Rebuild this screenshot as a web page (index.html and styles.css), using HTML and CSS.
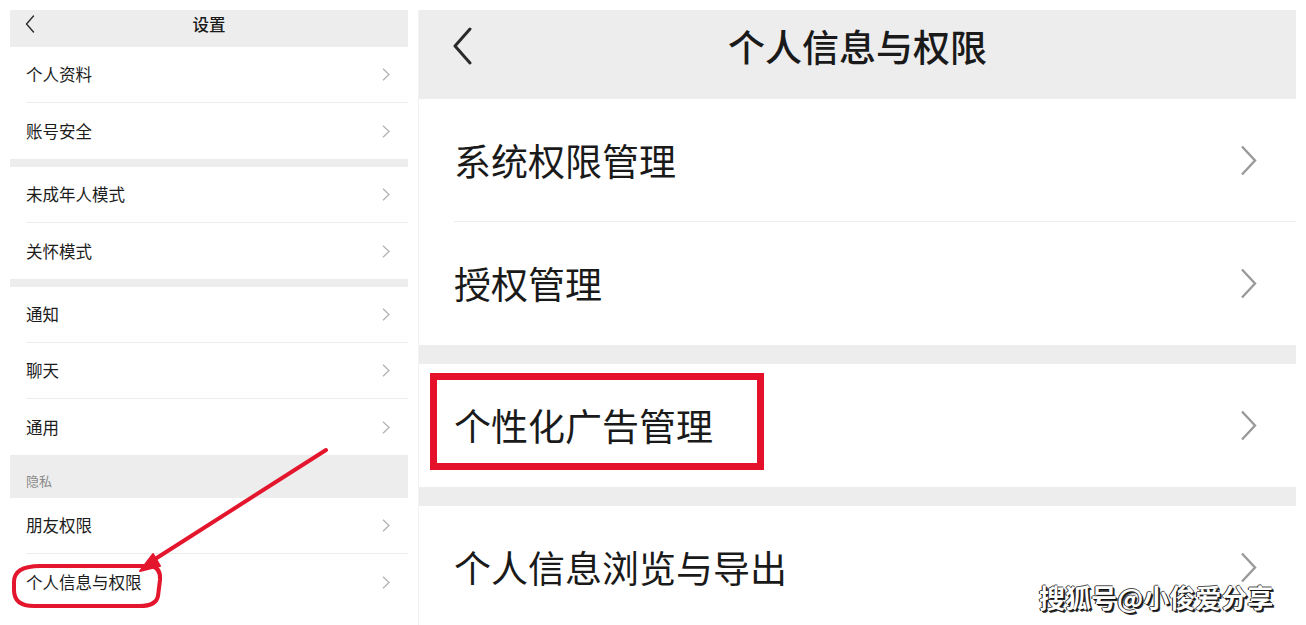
FILE: index.html
```html
<!DOCTYPE html>
<html lang="zh-CN">
<head>
<meta charset="utf-8">
<title>设置 - 个人信息与权限</title>
<link rel="stylesheet" href="styles.css">
</head>
<body>
<div class="page">
  <section class="panel panel-left">
    <header class="bar bar-left">
      <svg class="back back-sm" viewBox="0 0 10 18" width="10" height="18"><polyline points="8.5,1 1.5,9 8.5,17" /></svg>
      <div class="bar-title">设置</div>
      <div></div>
    </header>
    <div class="group">
      <div class="row"><span>个人资料</span><svg class="chev" viewBox="0 0 8 13" width="8" height="13"><polyline points="1,0.8 7,6.5 1,12.2"/></svg></div>
      <div class="row"><span>账号安全</span><svg class="chev" viewBox="0 0 8 13" width="8" height="13"><polyline points="1,0.8 7,6.5 1,12.2"/></svg></div>
    </div>
    <div class="gap"></div>
    <div class="group">
      <div class="row"><span>未成年人模式</span><svg class="chev" viewBox="0 0 8 13" width="8" height="13"><polyline points="1,0.8 7,6.5 1,12.2"/></svg></div>
      <div class="row"><span>关怀模式</span><svg class="chev" viewBox="0 0 8 13" width="8" height="13"><polyline points="1,0.8 7,6.5 1,12.2"/></svg></div>
    </div>
    <div class="gap"></div>
    <div class="group">
      <div class="row"><span>通知</span><svg class="chev" viewBox="0 0 8 13" width="8" height="13"><polyline points="1,0.8 7,6.5 1,12.2"/></svg></div>
      <div class="row"><span>聊天</span><svg class="chev" viewBox="0 0 8 13" width="8" height="13"><polyline points="1,0.8 7,6.5 1,12.2"/></svg></div>
      <div class="row"><span>通用</span><svg class="chev" viewBox="0 0 8 13" width="8" height="13"><polyline points="1,0.8 7,6.5 1,12.2"/></svg></div>
    </div>
    <div class="section-label">隐私</div>
    <div class="group">
      <div class="row"><span>朋友权限</span><svg class="chev" viewBox="0 0 8 13" width="8" height="13"><polyline points="1,0.8 7,6.5 1,12.2"/></svg></div>
      <div class="row"><span>个人信息与权限</span><svg class="chev" viewBox="0 0 8 13" width="8" height="13"><polyline points="1,0.8 7,6.5 1,12.2"/></svg></div>
    </div>
  </section>

  <section class="panel panel-right">
    <header class="bar bar-right">
      <svg class="back back-lg" viewBox="0 0 20 38" width="20" height="38"><polyline points="18,2 3,19 18,36" /></svg>
      <div class="bar-title big">个人信息与权限</div>
      <div></div>
    </header>
    <div class="group">
      <div class="row big-row"><span>系统权限管理</span><svg class="chev-lg" viewBox="0 0 17 31" width="17" height="31"><polyline points="2,1.5 15,15.5 2,29.5"/></svg></div>
      <div class="row big-row"><span>授权管理</span><svg class="chev-lg" viewBox="0 0 17 31" width="17" height="31"><polyline points="2,1.5 15,15.5 2,29.5"/></svg></div>
    </div>
    <div class="gap gap-lg"></div>
    <div class="group">
      <div class="row big-row highlighted"><span>个性化广告管理</span><svg class="chev-lg" viewBox="0 0 17 31" width="17" height="31"><polyline points="2,1.5 15,15.5 2,29.5"/></svg>
        <div class="red-box"></div>
      </div>
    </div>
    <div class="gap gap-lg"></div>
    <div class="group">
      <div class="row big-row"><span>个人信息浏览与导出</span><svg class="chev-lg" viewBox="0 0 17 31" width="17" height="31"><polyline points="2,1.5 15,15.5 2,29.5"/></svg></div>
    </div>
  </section>
</div>

<svg class="annot" viewBox="0 0 1306 625" width="1306" height="625">
  <line x1="326" y1="450" x2="152" y2="561" class="annot-line"/>
  <polygon points="140,571 160,566 153,554" class="annot-fill"/>
  <path d="M40,566 L150,566 Q161,567 160,580 L158,596 Q156,606 140,606 L34,606 Q14,606 14,590 L14,582 Q14,566 40,566 Z" class="annot-line"/>
</svg>

<div class="watermark">搜狐号@小俊爱分享</div>
</body>
</html>
```

FILE: styles.css
```css
* { box-sizing: border-box; }

html, body {
  margin: 0;
  padding: 0;
  background: #ffffff;
}

body {
  width: 1306px;
  height: 625px;
  overflow: hidden;
  position: relative;
  font-family: "Noto Sans CJK SC", "Noto Sans", sans-serif;
  color: #1c1c1c;
}

.page {
  display: flex;
  gap: 10px;
  padding: 10px 0 0 10px;
  align-items: flex-start;
}

.panel {
  background: #ffffff;
  display: flex;
  flex-direction: column;
}

.panel-left { width: 398px; }
.panel-right { width: 878px; border-left: 1px solid #f2f2f2; }

.bar {
  background: #ededed;
  display: grid;
  grid-template-columns: 1fr auto 1fr;
  align-items: center;
}

.bar-left {
  height: 37px;
  padding: 0 15px 9px 15px;
}

.bar-right {
  height: 89px;
  padding: 0 33px 17px 33px;
}

.bar-title {
  font-size: 16.5px;
  font-weight: 500;
  color: #1a1a1a;
  line-height: 1;
}

.bar-title.big {
  font-size: 37px;
  color: #1a1a1a;
}

.back polyline {
  fill: none;
  stroke: #2a2a2a;
  stroke-linecap: round;
  stroke-linejoin: round;
}
.back-sm polyline { stroke-width: 1.4; }
.back-lg polyline { stroke-width: 3; }

.group {
  background: #ffffff;
  display: flex;
  flex-direction: column;
}

.row {
  height: 56px;
  margin-left: 16px;
  padding-right: 18px;
  display: flex;
  align-items: center;
  justify-content: space-between;
  border-bottom: 1px solid #ececec;
  font-size: 16.5px;
  line-height: 1;
  position: relative;
}

.row:last-child { border-bottom: none; }

.chev polyline {
  fill: none;
  stroke: #b3b3b3;
  stroke-width: 1.3;
}

.big-row {
  height: 123px;
  margin-left: 35px;
  padding-left: 0;
  padding-right: 39px;
  font-size: 37px;
  color: #1a1a1a;
}

.chev-lg polyline {
  fill: none;
  stroke: #9a9a9a;
  stroke-width: 2.4;
}

.gap {
  height: 8px;
  background: #ededed;
}

.gap-lg { height: 19px; }

.section-label {
  height: 43px;
  background: #ededed;
  padding: 16px 0 0 16px;
  font-size: 13px;
  color: #8a8a8a;
  line-height: 20px;
}

.red-box {
  position: absolute;
  left: -24px;
  top: 9px;
  width: 334px;
  height: 97px;
  border: 7px solid #e5102a;
  pointer-events: none;
}

.annot {
  position: absolute;
  left: 0;
  top: 0;
  pointer-events: none;
}

.annot-line {
  fill: none;
  stroke: #e4162d;
  stroke-width: 4;
  stroke-linecap: round;
  stroke-linejoin: round;
}

.annot-fill {
  fill: #e4162d;
  stroke: #e4162d;
  stroke-width: 2;
  stroke-linejoin: round;
}

.watermark {
  position: absolute;
  left: 1039px;
  top: 580px;
  font-size: 26px;
  font-weight: 700;
  line-height: 34px;
  color: #ffffff;
  letter-spacing: 0;
  text-shadow: 1px 1px 0 #111, 2px 2px 0 #333, -1px 0 0 #222, 0 -1px 0 #555;
  white-space: nowrap;
}
```
